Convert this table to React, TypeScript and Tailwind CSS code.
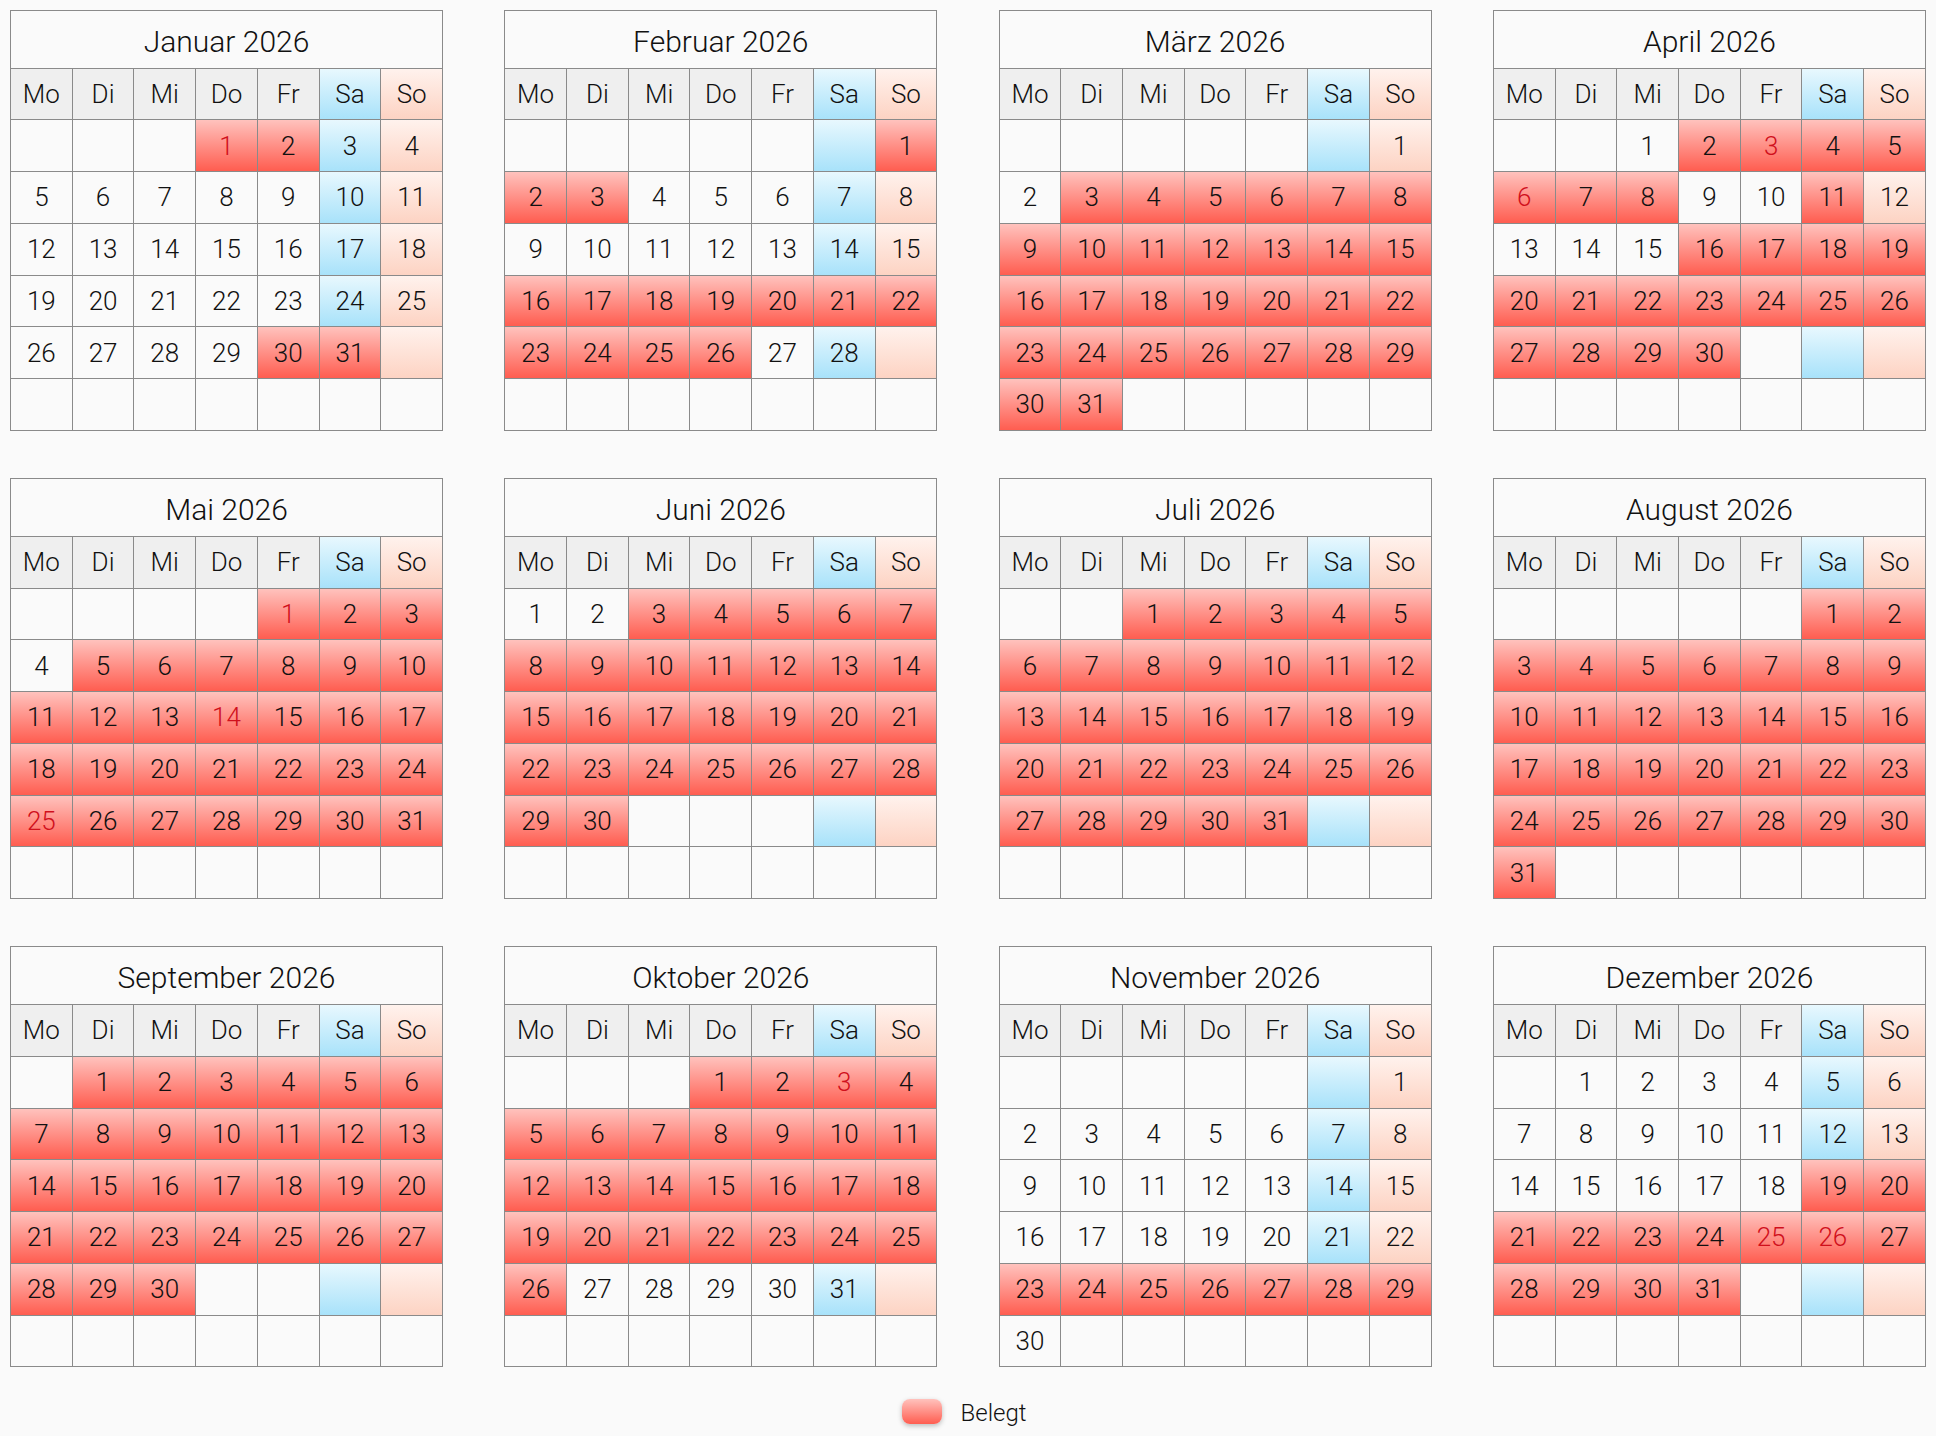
import React from "react";

const MONTHS = [
  "Januar",
  "Februar",
  "März",
  "April",
  "Mai",
  "Juni",
  "Juli",
  "August",
  "September",
  "Oktober",
  "November",
  "Dezember",
];
const WEEKDAYS = ["Mo", "Di", "Mi", "Do", "Fr", "Sa", "So"];
const YEAR = 2026;

const range = (a: number, b: number) => Array.from({ length: b - a + 1 }, (_, i) => a + i);

// booked days per month (1-based)
const BOOKED: Record<number, number[]> = {
  1: [1, 2, 30, 31],
  2: [1, 2, 3, ...range(16, 26)],
  3: range(3, 31),
  4: [...range(2, 8), 11, ...range(16, 30)],
  5: [1, 2, 3, ...range(5, 31)],
  6: range(3, 30),
  7: range(1, 31),
  8: range(1, 31),
  9: range(1, 30),
  10: range(1, 26),
  11: range(23, 29),
  12: range(19, 31),
};

// public holidays shown in red text
const HOLIDAYS: Record<number, number[]> = {
  1: [1],
  4: [3, 6],
  5: [1, 14, 25],
  10: [3],
  12: [25, 26],
};

const RED = "bg-[linear-gradient(to_bottom,#ffc2bd,#ff5d50)]";
const BLUE = "bg-[linear-gradient(to_bottom,#e8f8fe,#a8e2fa)]";
const PINK = "bg-[linear-gradient(to_bottom,#fff2ed,#fdd3c3)]";

const Month = ({ month }: { month: number }) => {
  const first = new Date(YEAR, month - 1, 1).getDay();
  const offset = (first + 6) % 7;
  const days = new Date(YEAR, month, 0).getDate();
  const booked = BOOKED[month] || [];
  const holidays = HOLIDAYS[month] || [];

  const cells = Array.from({ length: 42 }, (_, i) => {
    const d = i - offset + 1;
    return d >= 1 && d <= days ? d : null;
  });

  return (
    <div className="w-[433px] border-l border-t border-[#8a8a8a]">
      <div className="h-[58px] pt-[5px] border-r border-b border-[#8a8a8a] flex items-center justify-center text-[30px]">
        {MONTHS[month - 1]} {YEAR}
      </div>
      <div className="grid grid-cols-7">
        {WEEKDAYS.map((w, i) => (
          <div
            key={w}
            className={`h-[51.75px] border-r border-b border-[#8a8a8a] flex items-center justify-center ${
              i === 5 ? BLUE : i === 6 ? PINK : "bg-[#efefef]"
            }`}
          >
            {w}
          </div>
        ))}
        {cells.map((d, i) => {
          const col = i % 7;
          const row = Math.floor(i / 7);
          const isBooked = d !== null && booked.includes(d);
          let bg = "bg-[#fafafa]";
          if (isBooked) bg = RED;
          else if (row < 5 && col === 5) bg = BLUE;
          else if (row < 5 && col === 6) bg = PINK;
          const isHoliday = d !== null && holidays.includes(d);
          return (
            <div
              key={i}
              className={`h-[51.75px] border-r border-b border-[#8a8a8a] flex items-center justify-center ${bg} ${
                isHoliday ? "text-[#d0101c]" : ""
              }`}
            >
              {d}
            </div>
          );
        })}
      </div>
    </div>
  );
};

export default function App() {
  return (
    <div
      className="min-h-[1436px] bg-[#fafafa] pt-[9.5px] pl-[10px] text-[26px] font-light text-[#111111] leading-none"
      style={{ fontFamily: "'Helvetica Neue', Roboto, 'Liberation Sans', sans-serif" }}
    >
      <div className="grid grid-cols-[repeat(4,433px)] gap-x-[61.3px] gap-y-[47px]">
        {range(1, 12).map((m) => (
          <Month key={m} month={m} />
        ))}
      </div>

      {/* Legend */}
      <div className="flex items-center justify-center gap-[19px] mt-[31px] w-[1918px] pr-[10px]">
        <div className={`w-[40px] h-[25px] rounded-[8px] ${RED} shadow-[0_2px_5px_rgba(0,0,0,0.25)]`} />
        <span className="text-[24px] pt-[3px]">Belegt</span>
      </div>
    </div>
  );
}
